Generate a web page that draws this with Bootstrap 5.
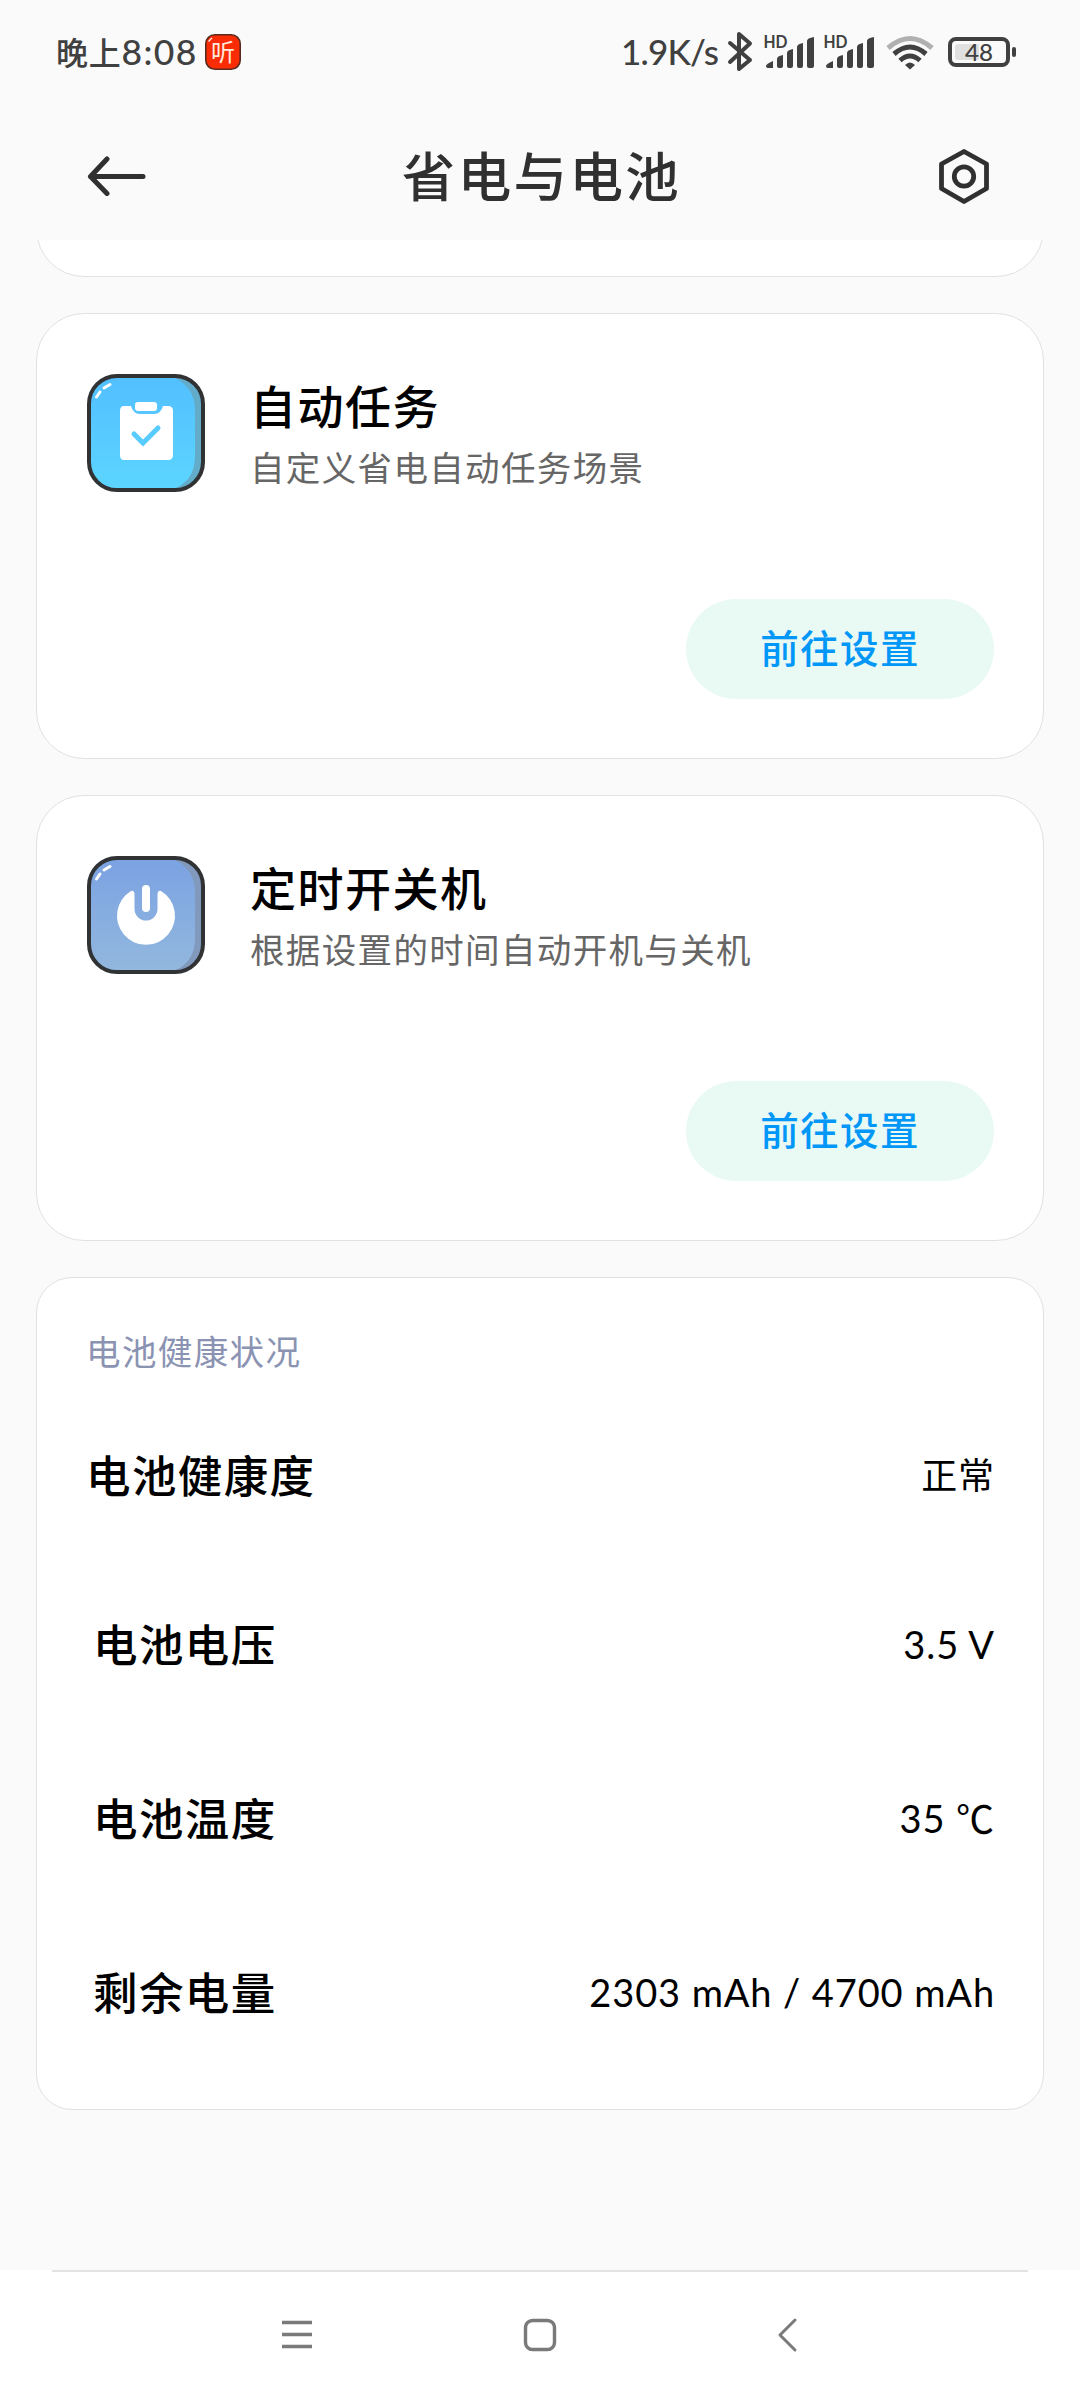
<!DOCTYPE html>
<html lang="zh-CN">
<head>
<meta charset="utf-8">
<meta name="viewport" content="width=device-width, initial-scale=1">
<title>省电与电池</title>
<link href="https://cdn.jsdelivr.net/npm/bootstrap@5.3.0/dist/css/bootstrap.min.css" rel="stylesheet">
<style>
body{background:#fafafa;font-family:Lato,"Noto Sans CJK SC",sans-serif;color:#000;height:2400px;overflow:hidden}
svg{display:block;flex:none}
.status-bar{height:104px;padding:0 63px 0 56px;color:#404040;font-size:35px;line-height:1}
.status-time{font-family:"Noto Sans CJK SC",sans-serif;font-weight:500;font-size:32px;letter-spacing:.8px;white-space:nowrap}
.status-clock{font-family:Lato,sans-serif;font-weight:500;font-size:35.5px;letter-spacing:1.3px}
.badge-gap{margin-left:7px}
.app-bar{height:136px;padding:0 88px 0 87px;color:#303030}
.app-title{font-size:53.5px;font-weight:500;letter-spacing:2.4px;line-height:1;padding-top:9px}
.scroll-area{height:2030px;padding:0 36px;overflow:hidden}
.panel{background:#fff;border:1px solid #e1e1e1;border-radius:48px}
.panel-tail{height:97px;margin-top:-60px;margin-bottom:36px}
.panel-task{height:446px;margin-bottom:36px;padding:60px 49px 59px 50px}
.panel-health{height:833px;border-radius:36px;padding:0 48px 0 49px}
.task-text{margin-left:45px}
.task-title{font-size:46px;font-weight:500;line-height:56px;letter-spacing:1.5px;margin-top:5px}
.task-note{font-size:34.5px;line-height:54px;letter-spacing:1.35px;color:#666;padding-top:6px}
.pill{width:308px;height:100px;background:#e9f9f3;color:#0097f9;font-size:38.5px;font-weight:500;letter-spacing:1.4px}
.health-head{font-size:34.5px;line-height:50px;letter-spacing:1.4px;color:#8b93b3;padding-top:49px}
.health-row{height:174px;padding-left:7px}
.health-row-first{height:164px;padding-left:0;margin-top:17px}
.health-name{font-size:44.5px;font-weight:500;letter-spacing:1.4px;line-height:1}
.health-value{font-size:38px;letter-spacing:.9px;line-height:1;padding-bottom:2px}
.health-word{font-size:36px}
.nav-keys{height:130px;background:#fff}
.nav-rule{height:2px;margin:0 52px;background:#e3e3e3}
.nav-icons{padding-top:23px}
</style>
<script src="https://cdn.jsdelivr.net/npm/bootstrap@5.3.0/dist/js/bootstrap.bundle.min.js"></script>
</head>
<body>
<header>
  <div class="status-bar d-flex align-items-center justify-content-between">
    <div class="d-flex align-items-center">
      <span class="status-time">晚上<span class="status-clock">8:08</span></span>
      <svg class="badge-gap" width="36" height="36" viewBox="0 0 36 36"><rect x=".8" y=".8" width="34.4" height="34.4" rx="9" fill="#fa2c05" stroke="#5a2a20" stroke-width="1.6"/><path d="M3.5 7.5 7 3.8" stroke="#fff" stroke-width="1.2"/><text x="6" y="27" font-family="Noto Sans CJK SC" font-size="24" fill="#ffe9dc">听</text></svg>
    </div>
    <svg width="398" height="44" viewBox="620 30 398 44" fill="#404040">
      <text x="622" y="65" font-family="Lato" font-weight="500" font-size="35" textLength="98">1.9K/s</text>
      <path d="M731 43 751 60 740 69V34L751 43.500 731 62" fill="none" stroke="#404040" stroke-width="4" stroke-linejoin="round" stroke-linecap="round"/>
      <g id="signal"><text x="764.500" y="48" font-family="Lato" font-weight="700" font-size="16.500" textLength="24" lengthAdjust="spacingAndGlyphs">HD</text><path d="M767 66Q767 64 774 61V68H769Q767 68 767 66ZM778 59Q778 56 784 55V66Q784 68 782 68H780Q778 68 778 66ZM788 53Q788 50 794 49V66Q794 68 792 68H790Q788 68 788 66ZM798 47Q798 44 804 43V66Q804 68 802 68H800Q798 68 798 66ZM808 41Q808 38 815 37V66Q815 68 813 68H810Q808 68 808 66Z"/></g>
      <use href="#signal" x="60"/>
      <g fill="none" stroke="#404040" stroke-width="5"><path d="M889 48Q911 29 933 48" stroke="#b0b0b0"/><path d="M895 54Q911 40 927 54"/><path d="M901 60.500Q911 51.500 921 60.500"/></g><path d="M906 65Q911 60 916 65L911 69.500Z"/>
      <rect x="951" y="39" width="58" height="26" rx="6" fill="none" stroke="#404040" stroke-width="4"/><path d="M959 44H980V60H959Q956 60 956 57V47Q956 44 959 44Z" fill="#e0e0e0"/><rect x="1013" y="47" width="4" height="10" rx="2"/>
      <text x="966" y="60.500" font-family="Lato" font-weight="500" font-size="23.500" textLength="28" lengthAdjust="spacingAndGlyphs">48</text>
    </svg>
  </div>
  <nav class="app-bar d-flex align-items-center justify-content-between">
    <svg width="60" height="48" viewBox="0 0 60 48" fill="none" stroke="#303030" stroke-width="5" stroke-linecap="round" stroke-linejoin="round"><path d="M56 28.500H3.500L20 11M3.500 28.500 20 45.500"/></svg>
    <h1 class="app-title mb-0">省电与电池</h1>
    <svg width="56" height="64" viewBox="0 0 56 64" fill="none" stroke="#303030" stroke-width="4.800" stroke-linejoin="round"><path d="M28 11.500 50.500 24V48.500L28 61.500 5.500 48.500V24Z"/><circle cx="28" cy="36.500" r="9.700"/></svg>
  </nav>
</header>
<main class="scroll-area">
  <section class="panel panel-tail"></section>
  <section class="panel panel-task d-flex flex-column justify-content-between">
    <div class="d-flex">
      <svg width="118" height="118" viewBox="0 0 118 118"><defs><linearGradient id="sky" x2="0" y2="1"><stop stop-color="#52bfff"/><stop offset="1" stop-color="#5cd5ff"/></linearGradient></defs><rect x="2" y="2" width="114" height="114" rx="28" fill="#62abc9"/><path d="M30 2H84Q108 12 108 36V82Q108 108 84 116H30Q2 116 2 88V30Q2 2 30 2Z" fill="url(#sky)"/><rect x="2" y="2" width="114" height="114" rx="28" fill="none" stroke="#303234" stroke-width="4"/><path d="M9.500 23 13 18M17 14 23 10.500" stroke="#fff" stroke-width="3" stroke-linecap="round"/><path d="M37 32H44Q46 39 52 40H68Q74 39 76 32H81Q86 32 86 37V81Q86 86 81 86H37Q33 86 33 81V37Q33 32 37 32Z" fill="#fff"/><rect x="48" y="28" width="22" height="9" rx="3" fill="#fff"/><path d="M47 60 56 69 71 54" fill="none" stroke="#58cbff" stroke-width="5" stroke-linecap="round"/></svg>
      <div class="task-text"><h2 class="task-title mb-0">自动任务</h2><p class="task-note mb-0">自定义省电自动任务场景</p></div>
    </div>
    <a class="pill btn rounded-pill border-0 align-self-end d-flex align-items-center justify-content-center p-0" role="button">前往设置</a>
  </section>
  <section class="panel panel-task d-flex flex-column justify-content-between">
    <div class="d-flex">
      <svg width="118" height="118" viewBox="0 0 118 118"><defs><linearGradient id="dusk" x2="0" y2="1"><stop stop-color="#7ba2e2"/><stop offset="1" stop-color="#92b8de"/></linearGradient></defs><rect x="2" y="2" width="114" height="114" rx="28" fill="#8199bc"/><path d="M30 2H84Q108 12 108 36V82Q108 108 84 116H30Q2 116 2 88V30Q2 2 30 2Z" fill="url(#dusk)"/><rect x="2" y="2" width="114" height="114" rx="28" fill="none" stroke="#303234" stroke-width="4"/><path d="M9.500 23 13 18M17 14 23 10.500" stroke="#fff" stroke-width="3" stroke-linecap="round"/><path d="M44 35Q47 34 47.500 38V53A11.500 11.500 0 0 0 70.500 53V38Q71 34 74 35A29 29 0 1 1 44 35Z" fill="#fff"/><rect x="55" y="29" width="8" height="27" rx="4" fill="#fff"/></svg>
      <div class="task-text"><h2 class="task-title mb-0">定时开关机</h2><p class="task-note mb-0">根据设置的时间自动开机与关机</p></div>
    </div>
    <a class="pill btn rounded-pill border-0 align-self-end d-flex align-items-center justify-content-center p-0" role="button">前往设置</a>
  </section>
  <section class="panel panel-health">
    <div class="health-head">电池健康状况</div>
    <div class="health-row-first d-flex align-items-center justify-content-between"><span class="health-name">电池健康度</span><span class="health-value health-word">正常</span></div>
    <div class="health-row d-flex align-items-center justify-content-between"><span class="health-name">电池电压</span><span class="health-value">3.5 V</span></div>
    <div class="health-row d-flex align-items-center justify-content-between"><span class="health-name">电池温度</span><span class="health-value">35 ℃</span></div>
    <div class="health-row d-flex align-items-center justify-content-between"><span class="health-name">剩余电量</span><span class="health-value">2303 mAh / 4700 mAh</span></div>
  </section>
</main>
<footer class="nav-keys">
  <div class="nav-rule"></div>
  <div class="nav-icons d-flex justify-content-center">
  <svg width="540" height="80" viewBox="270 2295 540 80" fill="none" stroke="#7a7a7a" stroke-width="3.400" stroke-linecap="round" stroke-linejoin="round"><path d="M282 2322.500H312M282 2334.500H312M282 2346.500H312" stroke-linecap="butt"/><rect x="525.500" y="2320.500" width="29" height="29" rx="7"/><path d="M795 2320 780 2335 795 2350" stroke-width="3"/></svg>
  </div>
</footer>
</body>
</html>
